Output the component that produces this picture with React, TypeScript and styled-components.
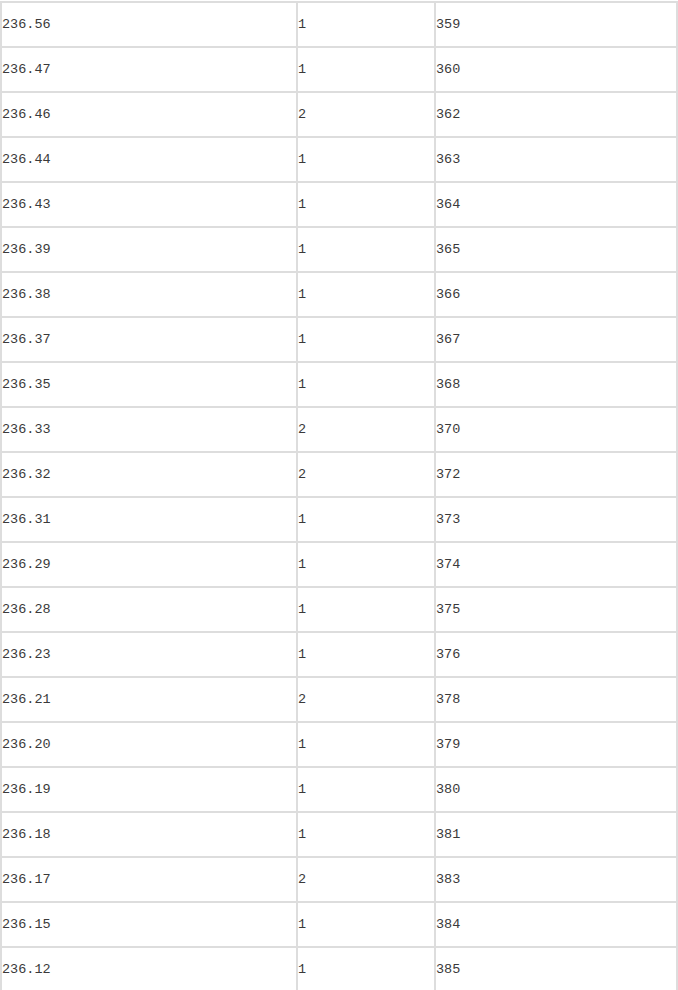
import React from 'react';
import styled, { createGlobalStyle } from 'styled-components';

const GlobalStyle = createGlobalStyle`
  html, body {
    margin: 0;
    padding: 0;
    background: #ffffff;
  }
  body {
    overflow: hidden;
  }
`;

const PriceTable = styled.table`
  margin-top: 1px;
  width: 678px;
  table-layout: fixed;
  border-collapse: separate;
  border-spacing: 0;
  border: 1px solid #dddddd;
  font-family: "Liberation Mono", "Noto Sans CJK SC", monospace;
  font-size: 13.5px;
  color: #3a3a3a;
`;

const Cell = styled.td<{ $width: number }>`
  box-sizing: border-box;
  width: ${(p) => p.$width}px;
  height: 45px;
  padding: 0;
  border: 1px solid #dddddd;
  vertical-align: middle;
  text-align: left;
  white-space: nowrap;
`;

const rows: [string, number, number][] = [
  ['236.56', 1, 359],
  ['236.47', 1, 360],
  ['236.46', 2, 362],
  ['236.44', 1, 363],
  ['236.43', 1, 364],
  ['236.39', 1, 365],
  ['236.38', 1, 366],
  ['236.37', 1, 367],
  ['236.35', 1, 368],
  ['236.33', 2, 370],
  ['236.32', 2, 372],
  ['236.31', 1, 373],
  ['236.29', 1, 374],
  ['236.28', 1, 375],
  ['236.23', 1, 376],
  ['236.21', 2, 378],
  ['236.20', 1, 379],
  ['236.19', 1, 380],
  ['236.18', 1, 381],
  ['236.17', 2, 383],
  ['236.15', 1, 384],
  ['236.12', 1, 385],
];

export const App = () => {
  return (
    <React.Fragment>
      <GlobalStyle />
      <PriceTable>
        <tbody>
          {rows.map(([price, count, total], index) => (
            <tr key={`row_${index}`}>
              <Cell $width={296}>{price}</Cell>
              <Cell $width={138}>{count}</Cell>
              <Cell $width={242}>{total}</Cell>
            </tr>
          ))}
        </tbody>
      </PriceTable>
    </React.Fragment>
  );
};

export default App;
